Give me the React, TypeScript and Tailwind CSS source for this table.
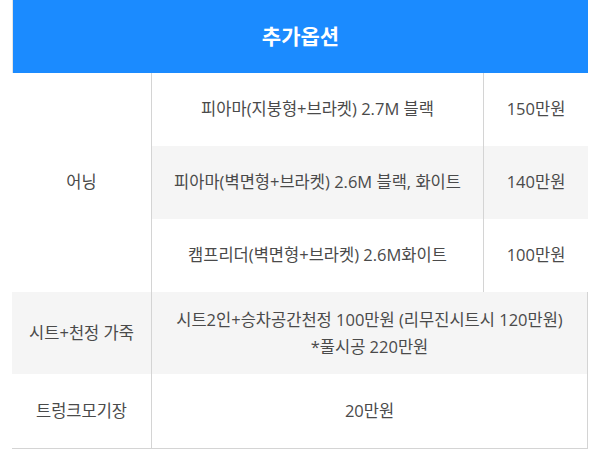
import React from "react";

const font = { fontFamily: '"Open Sans", "Noto Sans CJK KR", sans-serif' };

export default function App() {
  return (
    <div className="w-[600px] h-[450px] bg-white overflow-hidden" style={font}>
      <div className="ml-[12px] w-[576px] grid grid-cols-[140px_332px_104px] grid-rows-[73px_73px_73px_73px_82px_74px] text-[16.5px] text-[#4a4a4a] border-b border-[#d4d4d4]">
        <div className="col-span-3 bg-[#1b8bff] flex items-center justify-center text-white text-[21px] font-bold border-l border-[#e5e5e5]">
          추가옵션
        </div>
        <div className="row-span-3 flex items-center justify-center border-r border-[#d4d4d4]">어닝</div>
        <div className="flex items-center justify-center border-r border-[#d4d4d4]">피아마(지붕형+브라켓) 2.7M 블랙</div>
        <div className="flex items-center justify-center">150만원</div>
        <div className="flex items-center justify-center border-r border-[#d4d4d4] bg-[#f5f5f5]">피아마(벽면형+브라켓) 2.6M 블랙, 화이트</div>
        <div className="flex items-center justify-center bg-[#f5f5f5]">140만원</div>
        <div className="flex items-center justify-center border-r border-[#d4d4d4]">캠프리더(벽면형+브라켓) 2.6M화이트</div>
        <div className="flex items-center justify-center">100만원</div>
        <div className="flex items-center justify-center border-r border-[#d4d4d4] bg-[#f5f5f5]">시트+천정 가죽</div>
        <div className="col-span-2 flex flex-col items-center justify-center bg-[#f5f5f5] leading-[27px] border-r border-[#d4d4d4]">
          <span>시트2인+승차공간천정 100만원 (리무진시트시 120만원)</span>
          <span>*풀시공 220만원</span>
        </div>
        <div className="flex items-center justify-center border-r border-[#d4d4d4]">트렁크모기장</div>
        <div className="col-span-2 flex items-center justify-center border-r border-[#d4d4d4]">20만원</div>
      </div>
    </div>
  );
}
